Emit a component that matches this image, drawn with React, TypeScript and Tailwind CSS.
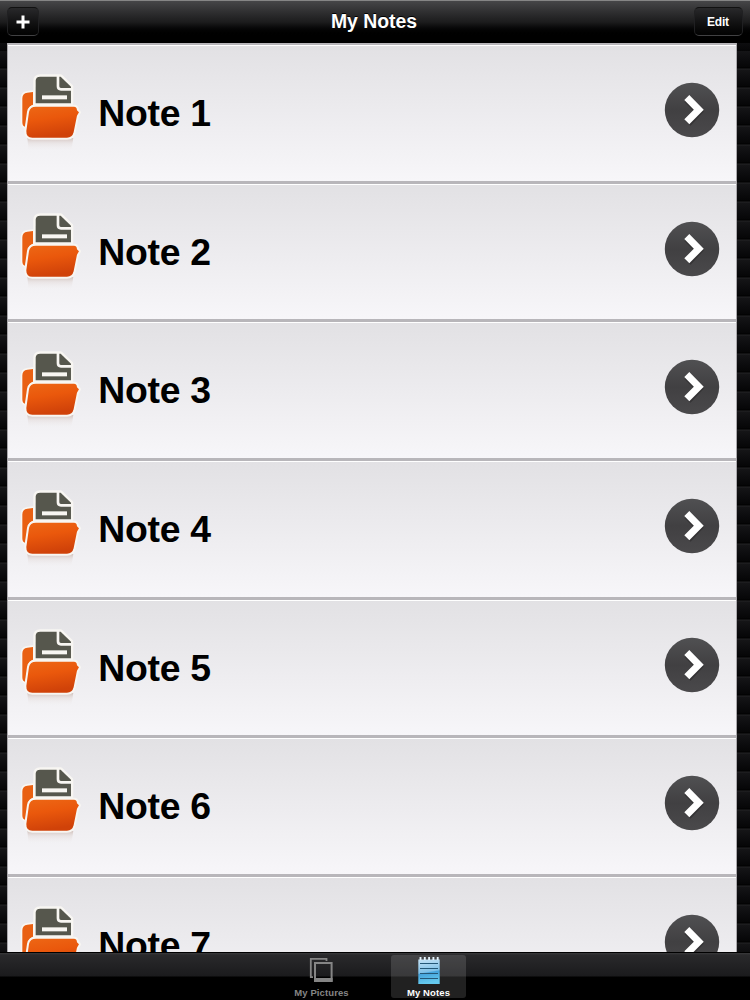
import { useState } from 'react';

const notes = ['Note 1', 'Note 2', 'Note 3', 'Note 4', 'Note 5', 'Note 6', 'Note 7'];

function FolderIcon() {
  return (
    <svg viewBox="60 40 190 240" className="mt-[28px] h-20 w-[63.3px] flex-shrink-0">
      <defs>
        <linearGradient id="folder" x1="0" y1="0" x2="0.25" y2="1">
          <stop offset="0" stopColor="#ed6715" />
          <stop offset="0.45" stopColor="#ea580c" />
          <stop offset="1" stopColor="#d04209" />
        </linearGradient>
        <linearGradient id="reflection" x1="0" y1="0" x2="0" y2="1">
          <stop offset="0" stopColor="#c8b4ac" stopOpacity="0.75" />
          <stop offset="0.4" stopColor="#e0d6d4" stopOpacity="0.45" />
          <stop offset="1" stopColor="#f0eeee" stopOpacity="0" />
        </linearGradient>
      </defs>
      <path d="M82 235H220L214 273H86Z" fill="url(#reflection)" />
      <path
        d="M67 116Q67 101 82 99L99 97V135Q88 138 84 153L76 202Q67 200 67 188Z"
        fill="#e96012"
        stroke="#f8f6f2"
        strokeWidth="10"
        strokeLinejoin="round"
        paintOrder="stroke"
      />
      <path
        d="M107 64Q107 51 121 51H182L213 81V131H107Z"
        fill="#56574d"
        stroke="#f8f6f2"
        strokeWidth="14"
        strokeLinejoin="round"
        paintOrder="stroke"
      />
      <path d="M174 47V80Q174 89 183 89H216" fill="none" stroke="#f8f6f2" strokeWidth="8" />
      <path d="M126 107H201V119H126Z" fill="#f8f6f2" />
      <path
        d="M87 157Q90 141 108 141H222Q231 141 231 152L237 158L231 168L221 218Q217 234 201 234H97Q78 234 79 214Z"
        fill="url(#folder)"
        stroke="#f8f6f2"
        strokeWidth="12"
        strokeLinejoin="round"
        paintOrder="stroke"
      />
    </svg>
  );
}

function ArrowBadge() {
  return (
    <svg viewBox="0 0 56 56" className="mt-[37px] h-14 w-14 flex-shrink-0">
      <defs>
        <linearGradient id="badge" x1="0" y1="0" x2="0" y2="1">
          <stop offset="0" stopColor="#505052" />
          <stop offset="0.5" stopColor="#414042" />
          <stop offset="1" stopColor="#4a494b" />
        </linearGradient>
      </defs>
      <circle cx="28" cy="28" r="27.2" fill="url(#badge)" />
      <path d="M23 17.5L35 29.5L24 41.5" fill="none" stroke="#29282a" strokeWidth="7" opacity="0.6" />
      <path d="M22.8 15.5L34.8 27.7L22.8 39.8" fill="none" stroke="#fff" strokeWidth="7" />
    </svg>
  );
}

function PicturesIcon() {
  return (
    <svg viewBox="0 0 24 26" className="mr-[2px] h-[26px] w-6" fill="none" stroke="#858585">
      <path d="M4 20.2H1.8V1.8H17.5V4" strokeWidth="1.8" />
      <path d="M6 6H22.6V24H6Z" strokeWidth="2" />
      <path d="M5 22.9H23.6" strokeWidth="3.8" />
    </svg>
  );
}

function NotepadIcon() {
  return (
    <svg viewBox="0 0 24 29" className="h-[29px] w-6">
      <defs>
        <linearGradient id="notepad" x1="0" y1="0" x2="0.15" y2="1">
          <stop offset="0" stopColor="#c5e2f5" />
          <stop offset="0.55" stopColor="#7fc1e8" />
          <stop offset="0.6" stopColor="#45a3dc" />
          <stop offset="1" stopColor="#65c9ee" />
        </linearGradient>
      </defs>
      <path d="M1.3 3.5H22.7V28H1.3Z" fill="url(#notepad)" />
      <path d="M3.5 1V4M7.8 1V4M12.1 1V4M16.4 1V4M20.7 1V4" stroke="#e5f3fc" strokeWidth="1.9" />
      <path d="M3 7.5H21M3 12.5H21M3 17.5H21M3 22.5H21" stroke="#245777" strokeWidth="1.1" />
    </svg>
  );
}

export default function App() {
  const [activeTab, setActiveTab] = useState('notes');

  return (
    <div className="flex h-[1000px] w-[750px] flex-col overflow-hidden bg-black font-['Liberation_Sans',Arial,sans-serif]">
      <header className="flex h-[43px] flex-shrink-0 items-center justify-between border-t border-[#858585] bg-linear-to-b from-[#464648] via-[#1c1c1d] to-black to-85% pr-[7px] pb-px pl-[7px]">
        <button className="flex h-[29px] w-8 items-center justify-center rounded-[5px] border border-t-[#111] border-r-[#202022] border-b-[#414143] border-l-[#202022] bg-linear-to-b from-[#29292b] to-[#030303]">
          <svg viewBox="0 0 14 14" className="h-3.5 w-3.5">
            <path d="M7 .5V13.5M.5 7H13.5" stroke="#fff" strokeWidth="3" />
          </svg>
        </button>
        <h1 className="pl-[15px] text-[19.4px] leading-none font-bold text-white [text-shadow:0_-1px_0_#000]">
          My Notes
        </h1>
        <button className="h-[29px] w-[49px] rounded-[5px] border border-t-[#111] border-r-[#202022] border-b-[#414143] border-l-[#202022] bg-linear-to-b from-[#29292b] to-[#030303] pr-px text-[12px] font-bold tracking-[-0.2px] text-white">
          Edit
        </button>
      </header>

      <main className="min-h-0 flex-1 overflow-hidden bg-[repeating-linear-gradient(to_bottom,#151517_0px,#0d0d0f_8px,#060607_16px,#000_17px,#242426_18px,#151517_19px)] bg-[position:0_8px] pr-[13px] pl-[7px]">
        <ul className="-mt-px border-r border-l border-[#aaa8ac]">
          {notes.map((note) => (
            <li
              key={note}
              className="flex h-[138.7px] items-start border-t-[3px] border-[#b8b6ba] bg-linear-to-b from-[#e2e1e4] to-[#f7f6f9] pr-4 pl-3 shadow-[inset_0_1px_0_#fff]"
            >
              <FolderIcon />
              <span className="mt-[46px] ml-[15px] flex-1 text-[37.4px] leading-[44px] font-bold tracking-[-0.3px] text-black">
                {note}
              </span>
              <ArrowBadge />
            </li>
          ))}
        </ul>
      </main>

      <nav className="flex h-12 flex-shrink-0 justify-center gap-[32px] border-t border-black bg-[linear-gradient(to_bottom,#3a3a3c_0px,#29292b_2px,#1b1b1d_23px,#000_24px)] pt-0.5">
        <button
          onClick={() => setActiveTab('pictures')}
          className={`flex h-[43px] w-[75px] flex-col items-center rounded-[3px] pt-[2px] text-[9.5px] leading-none font-bold tracking-[0.1px] ${activeTab === 'pictures' ? 'bg-white/13 text-white' : 'text-[#858585]'}`}
        >
          <PicturesIcon />
          <span className="mt-[5px] whitespace-nowrap">My Pictures</span>
        </button>
        <button
          onClick={() => setActiveTab('notes')}
          className={`flex h-[43px] w-[75px] flex-col items-center rounded-[3px] pt-px text-[9.5px] leading-none font-bold tracking-[0.1px] ${activeTab === 'notes' ? 'bg-white/13 text-white' : 'text-[#858585]'}`}
        >
          <NotepadIcon />
          <span className="mt-[3px] whitespace-nowrap">My Notes</span>
        </button>
      </nav>
    </div>
  );
}
